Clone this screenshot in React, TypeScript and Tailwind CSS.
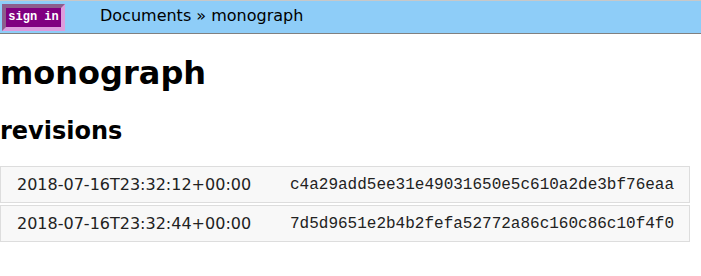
const revisions = [
  { date: "2018-07-16T23:32:12+00:00", hash: "c4a29add5ee31e49031650e5c610a2de3bf76eaa" },
  { date: "2018-07-16T23:32:44+00:00", hash: "7d5d9651e2b4b2fefa52772a86c160c86c10f4f0" },
];

export default function App() {
  return (
    <div className="min-h-screen bg-white text-black font-['Verdana','DejaVu_Sans',sans-serif]">
      <header className="h-[34px] flex items-center bg-[#8ecdf8] border-t border-t-[#c8c8c8] border-b border-b-[#808080]">
        <button className="ml-[2px] h-[27px] w-[63px] flex items-center justify-center bg-[#800080] border-4 border-t-[#8c5e8c] border-l-[#8c5e8c] border-b-[#dd9ddd] border-r-[#dd9ddd] text-white text-[12px] font-bold font-['Liberation_Mono','DejaVu_Sans_Mono',monospace]">
          sign in
        </button>
        <nav className="ml-[35px] text-[16px] leading-[20px] pb-[2px]">Documents » monograph</nav>
      </header>

      <h1 className="mt-[21px] text-[32px] leading-[37px] font-bold">monograph</h1>
      <h2 className="mt-[25px] text-[24px] leading-[28px] font-bold">revisions</h2>

      <div className="mt-[21px] flex flex-col gap-[2px]">
        {revisions.map((r) => (
          <div key={r.hash} className="w-[690px] h-[37px] flex items-center border border-[#dddddd] bg-[#f8f8f8] text-[#222]">
            <span className="pl-4 w-[289px] text-[16px]">{r.date}</span>
            <span className="text-[16px] font-['Liberation_Mono','Courier_New',monospace]">{r.hash}</span>
          </div>
        ))}
      </div>
    </div>
  );
}
